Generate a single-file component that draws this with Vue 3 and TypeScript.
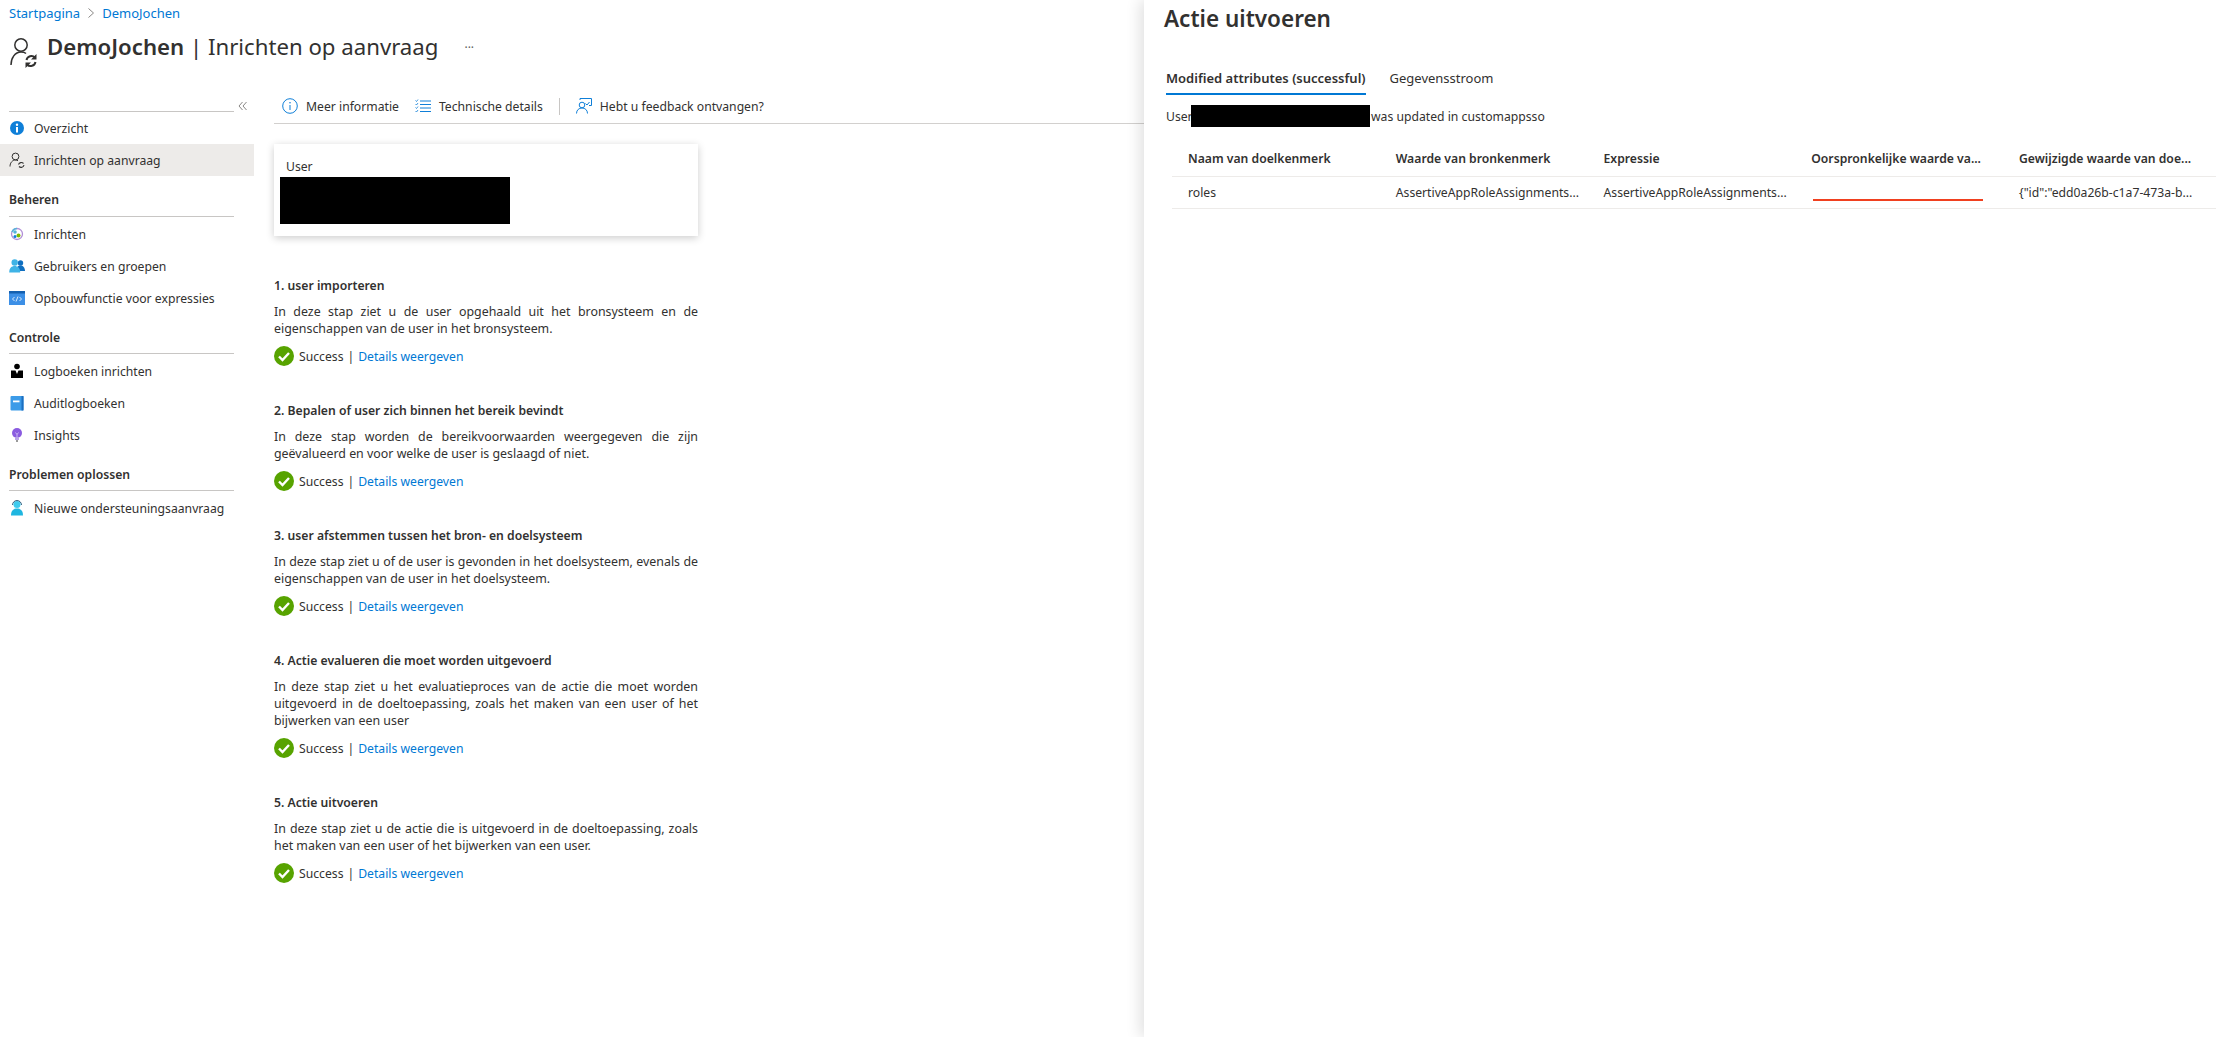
<script setup lang="ts">
type NavItem = { label: string; icon: string; active?: boolean }
type NavGroup = { title?: string; items: NavItem[] }

const navGroups: NavGroup[] = [
  {
    items: [
      { label: 'Overzicht', icon: 'info' },
      { label: 'Inrichten op aanvraag', icon: 'sync', active: true },
    ],
  },
  {
    title: 'Beheren',
    items: [
      { label: 'Inrichten', icon: 'provision' },
      { label: 'Gebruikers en groepen', icon: 'users' },
      { label: 'Opbouwfunctie voor expressies', icon: 'code' },
    ],
  },
  {
    title: 'Controle',
    items: [
      { label: 'Logboeken inrichten', icon: 'log' },
      { label: 'Auditlogboeken', icon: 'book' },
      { label: 'Insights', icon: 'bulb' },
    ],
  },
  {
    title: 'Problemen oplossen',
    items: [{ label: 'Nieuwe ondersteuningsaanvraag', icon: 'support' }],
  },
]

const steps = [
  {
    title: '1. user importeren',
    text: 'In deze stap ziet u de user opgehaald uit het bronsysteem en de eigenschappen van de user in het bronsysteem.',
  },
  {
    title: '2. Bepalen of user zich binnen het bereik bevindt',
    text: 'In deze stap worden de bereikvoorwaarden weergegeven die zijn geëvalueerd en voor welke de user is geslaagd of niet.',
  },
  {
    title: '3. user afstemmen tussen het bron- en doelsysteem',
    text: 'In deze stap ziet u of de user is gevonden in het doelsysteem, evenals de eigenschappen van de user in het doelsysteem.',
  },
  {
    title: '4. Actie evalueren die moet worden uitgevoerd',
    text: 'In deze stap ziet u het evaluatieproces van de actie die moet worden uitgevoerd in de doeltoepassing, zoals het maken van een user of het bijwerken van een user',
  },
  {
    title: '5. Actie uitvoeren',
    text: 'In deze stap ziet u de actie die is uitgevoerd in de doeltoepassing, zoals het maken van een user of het bijwerken van een user.',
  },
]

const columns = [
  'Naam van doelkenmerk',
  'Waarde van bronkenmerk',
  'Expressie',
  'Oorspronkelijke waarde va...',
  'Gewijzigde waarde van doe...',
]
</script>

<template>
  <div class="page">
    <div class="left">
      <div class="crumbs">
        <span class="link">Startpagina</span>
        <svg class="chev" viewBox="0 0 8 12"><path d="M1.5 1.5 6.5 6l-5 4.500" fill="none" stroke="#8a8886" stroke-width="1" /></svg>
        <span class="link">DemoJochen</span>
      </div>
      <div class="heading">
        <svg class="head-icon" viewBox="0 0 28 32">
          <circle cx="11" cy="8" r="6.200" fill="none" stroke="#323130" stroke-width="1.500" />
          <path d="M1 28c0-7 4-13 10-13 2 0 4 .5 5 1.500" fill="none" stroke="#323130" stroke-width="1.500" />
          <path d="M16.500 23a5 5 0 0 1 8.500-2.500M25.500 25a5 5 0 0 1-8.500 2.500" fill="none" stroke="#323130" stroke-width="2" />
          <path d="M26.500 17v5.500H21zM15.500 31v-5.500H21z" fill="#323130" />
        </svg>
        <h1><b>DemoJochen</b> | Inrichten op aanvraag</h1>
        <span class="dots">···</span>
      </div>
      <div class="columns">
        <aside class="sidebar">
          <div class="collapse-row">
            <svg class="collapse" viewBox="0 0 10 10"><path d="M4.500 1 1 5l3.500 4M8.500 1 5 5l3.500 4" fill="none" stroke="#8a8886" stroke-width="1" /></svg>
          </div>
          <div v-for="(group, g) in navGroups" :key="g" class="group">
            <div v-if="group.title" class="group-title">{{ group.title }}</div>
            <div v-for="item in group.items" :key="item.label" class="nav-item" :class="{ active: item.active }">
              <svg class="nav-icon" viewBox="0 0 16 16">
                <template v-if="item.icon === 'info'">
                  <circle cx="8" cy="8" r="7" fill="#0f7fd8" />
                  <rect x="7" y="7" width="2" height="5.500" fill="#fff" />
                  <circle cx="8" cy="4.800" r="1.200" fill="#fff" />
                </template>
                <template v-else-if="item.icon === 'sync'">
                  <circle cx="6.500" cy="4.500" r="3.400" fill="none" stroke="#323130" stroke-width="1" />
                  <path d="M1 14.500c0-3.800 2.500-6.500 5.500-6.500 1 0 2 .3 2.500.8" fill="none" stroke="#323130" stroke-width="1" />
                  <path d="M9.500 12.500a3 3 0 0 1 5-1M15 13a3 3 0 0 1-5 1.500" fill="none" stroke="#323130" stroke-width="1.100" />
                </template>
                <template v-else-if="item.icon === 'provision'">
                  <circle cx="8" cy="8" r="5.500" fill="none" stroke="#b18fd6" stroke-width="1.300" />
                  <path d="M3 6a5.500 5.500 0 0 1 5-3.500" fill="none" stroke="#59b4d9" stroke-width="1.500" />
                  <circle cx="6" cy="6" r="1.800" fill="#59b4d9" />
                  <circle cx="9.500" cy="9.500" r="2" fill="#7fba00" />
                  <circle cx="6" cy="10.500" r="1.500" fill="#0f7fd8" />
                </template>
                <template v-else-if="item.icon === 'users'">
                  <circle cx="11.500" cy="5" r="2.700" fill="#0f6fc0" />
                  <path d="M7 13c0-3.500 2-5.500 4.500-5.500s4.500 2 4.500 5.500z" fill="#0f6fc0" />
                  <circle cx="5.700" cy="4.500" r="3.200" fill="#3fb3e6" />
                  <path d="M.2 14.500c0-4.500 2.500-6.500 5.500-6.500s5.500 2 5.500 6.500z" fill="#3fb3e6" />
                </template>
                <template v-else-if="item.icon === 'code'">
                  <rect y="1" width="16" height="14" fill="#3c8fe6" />
                  <rect y="1" width="16" height="2.500" fill="#1460b0" />
                  <path d="M5.500 7 3.500 9l2 2M10.500 7l2 2-2 2M9 6.500 7 11.500" fill="none" stroke="#fff" stroke-width=".8" />
                </template>
                <template v-else-if="item.icon === 'log'">
                  <circle cx="8" cy="3.500" r="2.800" fill="#000" />
                  <path d="M2 7.500h4.500L8 11l1.500-3.500H14V15H2z" fill="#000" />
                </template>
                <template v-else-if="item.icon === 'book'">
                  <rect x="1.500" y="1" width="13" height="14.500" rx="1" fill="#3c9be8" />
                  <rect x="12.500" y="1" width="2" height="14.500" fill="#1c6fc0" />
                  <rect x="4" y="5.500" width="6.500" height="1.800" fill="#fff" />
                </template>
                <template v-else-if="item.icon === 'bulb'">
                  <circle cx="8" cy="6" r="5" fill="#8a5be0" />
                  <path d="M6 10h4v3H6z" fill="#b9a3e8" />
                  <path d="M7 13h2v2H7z" fill="#9a9a9a" />
                  <path d="M6.500 5.500 8 7.500l1.500-2M8 7.500V10" fill="none" stroke="#e3d8fa" stroke-width=".7" />
                </template>
                <template v-else>
                  <circle cx="8" cy="4.500" r="3.500" fill="#3ecbee" />
                  <path d="M2 15.500c0-5 2.500-7 6-7s6 2 6 7z" fill="#1fb6e0" />
                  <path d="M3.500 5a4.500 4.500 0 0 1 9 0" fill="none" stroke="#1d4e72" stroke-width=".9" />
                </template>
              </svg>
              <span>{{ item.label }}</span>
            </div>
          </div>
        </aside>
        <main class="main">
          <div class="toolbar">
            <div class="tool">
              <svg class="tool-icon" viewBox="0 0 16 16">
                <circle cx="8" cy="8" r="7.300" fill="none" stroke="#0f7fd8" stroke-width="1" />
                <rect x="7.500" y="7" width="1" height="5" fill="#0f7fd8" />
                <circle cx="8" cy="4.800" r=".8" fill="#0f7fd8" />
              </svg>
              <span>Meer informatie</span>
            </div>
            <div class="tool">
              <svg class="tool-icon" viewBox="0 0 16 16">
                <path d="M5 3h11M5 6.500h11M5 10h11M5 13.500h11" stroke="#0f7fd8" stroke-width="1" />
                <path d="M.5 2.500 1.500 3.500 3 1.500M.5 6 1.500 7 3 5M.5 9.500l1 1L3 8.500M.5 13l1 1L3 12" fill="none" stroke="#0f7fd8" stroke-width=".8" />
              </svg>
              <span>Technische details</span>
            </div>
            <div class="tool-sep"></div>
            <div class="tool">
              <svg class="tool-icon" viewBox="0 0 16 16">
                <circle cx="6" cy="7" r="2.800" fill="none" stroke="#0f7fd8" stroke-width="1" />
                <path d="M.5 15.500c0-3.500 2.500-5.500 5.500-5.500s5.500 2 5.500 5.500" fill="none" stroke="#0f7fd8" stroke-width="1" />
                <path d="M4 2V.5h11.500v7H13" fill="none" stroke="#0f7fd8" stroke-width="1" />
                <path d="M9.500 5.500 11 7l2.500-3" fill="none" stroke="#0f7fd8" stroke-width="1" />
              </svg>
              <span>Hebt u feedback ontvangen?</span>
            </div>
          </div>
          <div class="card">
            <div class="card-label">User</div>
            <div class="redact-block"></div>
          </div>
          <section v-for="step in steps" :key="step.title" class="step">
            <h3>{{ step.title }}</h3>
            <p>{{ step.text }}</p>
            <div class="result">
              <svg class="check" viewBox="0 0 20 20">
                <circle cx="10" cy="10" r="10" fill="#57a300" />
                <path d="M5 10.500 8.500 14 15 7" fill="none" stroke="#fff" stroke-width="2.400" />
              </svg>
              <span>Success</span>
              <span class="pipe">|</span>
              <span class="link">Details weergeven</span>
            </div>
          </section>
        </main>
      </div>
    </div>
    <div class="panel">
      <h2>Actie uitvoeren</h2>
      <div class="tabs">
        <div class="tab selected">Modified attributes (successful)</div>
        <div class="tab">Gegevensstroom</div>
      </div>
      <div class="summary">
        <span class="summary-user">User</span><span class="redact-inline"></span><span>was updated in customappsso</span>
      </div>
      <div class="table">
        <div class="row head">
          <div v-for="col in columns" :key="col" class="cell">{{ col }}</div>
        </div>
        <div class="row">
          <div class="cell">roles</div>
          <div class="cell">AssertiveAppRoleAssignments...</div>
          <div class="cell">AssertiveAppRoleAssignments...</div>
          <div class="cell"><div class="red-mark"></div></div>
          <div class="cell">{"id":"edd0a26b-c1a7-473a-b...</div>
        </div>
      </div>
    </div>
  </div>
</template>

<style>
html,
body {
  margin: 0;
  background: #fff;
  overflow: hidden;
}
</style>

<style scoped>
.page {
  width: 2224px;
  height: 1037px;
  display: flex;
  font-family: "Noto Sans", "Open Sans", sans-serif;
  font-size: 12.2px;
  color: #323130;
  overflow: hidden;
  background: #fff;
}

.left {
  width: 1144px;
  flex: none;
}

.link {
  color: #0078d4;
}

.crumbs {
  height: 26px;
  padding-left: 9px;
  display: flex;
  align-items: center;
  gap: 7px;
  font-size: 13px;
}

.chev {
  width: 8px;
  height: 12px;
}

.heading {
  height: 42px;
  padding-left: 10px;
  display: flex;
  align-items: center;
}

.head-icon {
  width: 28px;
  height: 32px;
  margin-top: 12px;
  flex: none;
}

h1 {
  margin: 0 0 0 9px;
  font-size: 22.2px;
  font-weight: 400;
  line-height: 30px;
}

h1 b {
  font-weight: 600;
}

.dots {
  margin-left: 26px;
  font-size: 12px;
  color: #605e5c;
}

.columns {
  display: flex;
}

.sidebar {
  width: 254px;
  flex: none;
}

.collapse-row {
  height: 44px;
  margin: 0 20px 0 9px;
  border-bottom: 1px solid #c8c6c4;
  box-sizing: border-box;
  position: relative;
}

.collapse {
  position: absolute;
  right: -14px;
  top: 33px;
  width: 10px;
  height: 10px;
}

.group-title {
  height: 41px;
  margin: 0 20px 1px 9px;
  padding-top: 12px;
  box-sizing: border-box;
  border-bottom: 1px solid #c8c6c4;
  font-weight: 600;
  line-height: 24px;
}

.group:nth-child(n + 4) .group-title {
  height: 40px;
}

.nav-item {
  height: 32px;
  padding-left: 9px;
  display: flex;
  align-items: center;
  gap: 9px;
}

.nav-item.active {
  background: #edebe9;
}

.nav-icon {
  width: 16px;
  height: 16px;
  flex: none;
}

.main {
  margin-left: 20px;
  flex: 1;
}

.toolbar {
  height: 56px;
  box-sizing: border-box;
  padding: 0 0 8px 8px;
  border-bottom: 1px solid #d2d0ce;
  display: flex;
  align-items: flex-end;
}

.tool {
  display: flex;
  align-items: center;
  gap: 8px;
  margin-right: 16px;
  height: 18px;
}

.tool-icon {
  width: 16px;
  height: 16px;
}

.tool-sep {
  width: 1px;
  height: 17px;
  background: #c8c6c4;
  margin-right: 16px;
}

.card {
  width: 424px;
  height: 92px;
  margin-top: 20px;
  box-sizing: border-box;
  padding: 13px 0 0 6px;
  box-shadow: 0 2px 8px rgba(0, 0, 0, 0.2);
}

.card-label {
  padding-left: 6px;
  line-height: 20px;
}

.redact-block {
  width: 230px;
  height: 47px;
  background: #000;
}

.step {
  width: 424px;
  margin-top: 34px;
}

.card + .step {
  margin-top: 40px;
}

.step h3 {
  margin: 0;
  font-size: 12.2px;
  font-weight: 600;
  line-height: 20px;
}

.step p {
  margin: 7px 0 0;
  font-size: 12.4px;
  line-height: 17px;
  text-align: justify;
}

.result {
  height: 22px;
  margin-top: 8px;
  display: flex;
  align-items: center;
}

.check {
  width: 20px;
  height: 20px;
  margin-right: 5px;
}

.pipe {
  margin: 0 4px;
}

.panel {
  width: 1080px;
  flex: none;
  box-sizing: border-box;
  padding-left: 20px;
  box-shadow: -4px 0 14px rgba(0, 0, 0, 0.12);
  position: relative;
}

h2 {
  margin: 0;
  height: 38px;
  font-size: 22.5px;
  font-weight: 600;
  line-height: 38px;
}

.tabs {
  display: flex;
  gap: 24px;
  margin: 26px 0 0 2px;
  height: 31px;
  font-size: 13px;
}

.tab {
  height: 31px;
  box-sizing: border-box;
  line-height: 28px;
}

.tab.selected {
  font-weight: 600;
  border-bottom: 2px solid #0078d4;
}

.summary {
  display: flex;
  align-items: center;
  height: 22px;
  margin: 10px 0 0 2px;
}

.summary-user {
  width: 25px;
  white-space: nowrap;
}

.redact-inline {
  width: 179px;
  height: 22px;
  margin-right: 1px;
  background: #000;
  position: relative;
}

.table {
  margin: 14px 8px 0 8px;
}

.row {
  display: grid;
  grid-template-columns: repeat(5, 207.750px);
  height: 32px;
  box-sizing: border-box;
  align-items: center;
  padding-left: 16px;
  border-bottom: 1px solid #edebe9;
}

.row.head {
  font-weight: 600;
  height: 36px;
}

.cell {
  white-space: nowrap;
}

.red-mark {
  width: 170px;
  height: 2px;
  margin: 15px 0 0 2px;
  background: #f0401f;
}
</style>
